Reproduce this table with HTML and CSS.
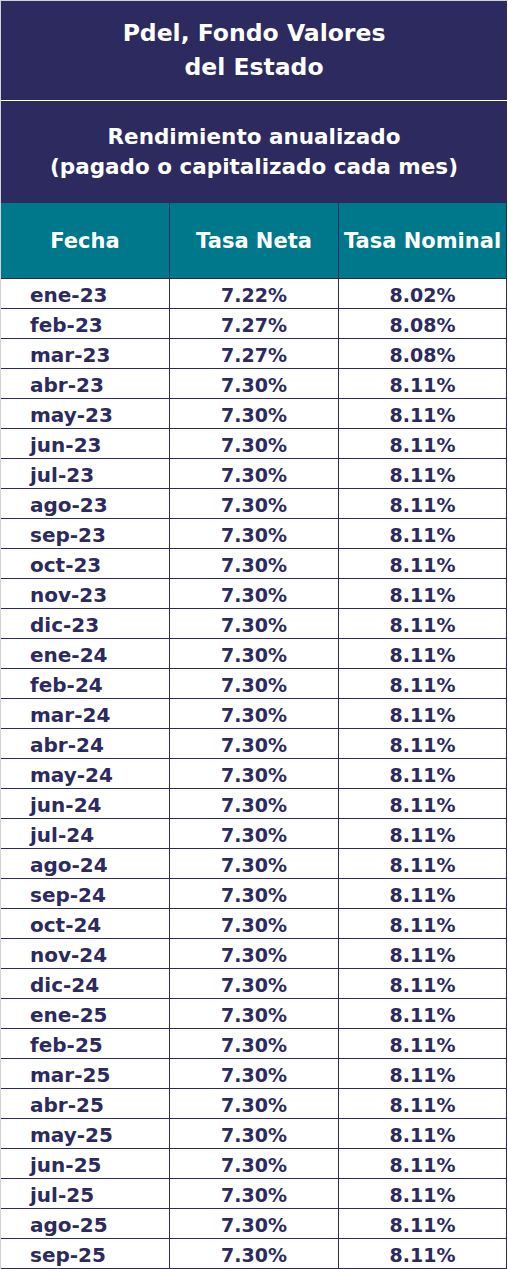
FILE: index.html
```html
<!DOCTYPE html>
<html lang="es">
<head>
<meta charset="utf-8">
<title>Pdel, Fondo Valores del Estado</title>
<link rel="stylesheet" href="styles.css">
</head>
<body>
<div class="page">
  <div class="sheet">
    <div class="title">Pdel, Fondo Valores<br>del Estado</div>
    <div class="subtitle">Rendimiento anualizado<br>(pagado o capitalizado cada mes)</div>
    <div class="row head">
      <div class="cell">Fecha</div>
      <div class="cell">Tasa Neta</div>
      <div class="cell">Tasa Nominal</div>
    </div>
    <div class="row"><div class="cell date">ene-23</div><div class="cell">7.22%</div><div class="cell">8.02%</div></div>
    <div class="row"><div class="cell date">feb-23</div><div class="cell">7.27%</div><div class="cell">8.08%</div></div>
    <div class="row"><div class="cell date">mar-23</div><div class="cell">7.27%</div><div class="cell">8.08%</div></div>
    <div class="row"><div class="cell date">abr-23</div><div class="cell">7.30%</div><div class="cell">8.11%</div></div>
    <div class="row"><div class="cell date">may-23</div><div class="cell">7.30%</div><div class="cell">8.11%</div></div>
    <div class="row"><div class="cell date">jun-23</div><div class="cell">7.30%</div><div class="cell">8.11%</div></div>
    <div class="row"><div class="cell date">jul-23</div><div class="cell">7.30%</div><div class="cell">8.11%</div></div>
    <div class="row"><div class="cell date">ago-23</div><div class="cell">7.30%</div><div class="cell">8.11%</div></div>
    <div class="row"><div class="cell date">sep-23</div><div class="cell">7.30%</div><div class="cell">8.11%</div></div>
    <div class="row"><div class="cell date">oct-23</div><div class="cell">7.30%</div><div class="cell">8.11%</div></div>
    <div class="row"><div class="cell date">nov-23</div><div class="cell">7.30%</div><div class="cell">8.11%</div></div>
    <div class="row"><div class="cell date">dic-23</div><div class="cell">7.30%</div><div class="cell">8.11%</div></div>
    <div class="row"><div class="cell date">ene-24</div><div class="cell">7.30%</div><div class="cell">8.11%</div></div>
    <div class="row"><div class="cell date">feb-24</div><div class="cell">7.30%</div><div class="cell">8.11%</div></div>
    <div class="row"><div class="cell date">mar-24</div><div class="cell">7.30%</div><div class="cell">8.11%</div></div>
    <div class="row"><div class="cell date">abr-24</div><div class="cell">7.30%</div><div class="cell">8.11%</div></div>
    <div class="row"><div class="cell date">may-24</div><div class="cell">7.30%</div><div class="cell">8.11%</div></div>
    <div class="row"><div class="cell date">jun-24</div><div class="cell">7.30%</div><div class="cell">8.11%</div></div>
    <div class="row"><div class="cell date">jul-24</div><div class="cell">7.30%</div><div class="cell">8.11%</div></div>
    <div class="row"><div class="cell date">ago-24</div><div class="cell">7.30%</div><div class="cell">8.11%</div></div>
    <div class="row"><div class="cell date">sep-24</div><div class="cell">7.30%</div><div class="cell">8.11%</div></div>
    <div class="row"><div class="cell date">oct-24</div><div class="cell">7.30%</div><div class="cell">8.11%</div></div>
    <div class="row"><div class="cell date">nov-24</div><div class="cell">7.30%</div><div class="cell">8.11%</div></div>
    <div class="row"><div class="cell date">dic-24</div><div class="cell">7.30%</div><div class="cell">8.11%</div></div>
    <div class="row"><div class="cell date">ene-25</div><div class="cell">7.30%</div><div class="cell">8.11%</div></div>
    <div class="row"><div class="cell date">feb-25</div><div class="cell">7.30%</div><div class="cell">8.11%</div></div>
    <div class="row"><div class="cell date">mar-25</div><div class="cell">7.30%</div><div class="cell">8.11%</div></div>
    <div class="row"><div class="cell date">abr-25</div><div class="cell">7.30%</div><div class="cell">8.11%</div></div>
    <div class="row"><div class="cell date">may-25</div><div class="cell">7.30%</div><div class="cell">8.11%</div></div>
    <div class="row"><div class="cell date">jun-25</div><div class="cell">7.30%</div><div class="cell">8.11%</div></div>
    <div class="row"><div class="cell date">jul-25</div><div class="cell">7.30%</div><div class="cell">8.11%</div></div>
    <div class="row"><div class="cell date">ago-25</div><div class="cell">7.30%</div><div class="cell">8.11%</div></div>
    <div class="row"><div class="cell date">sep-25</div><div class="cell">7.30%</div><div class="cell">8.11%</div></div>
  </div>
</div>
</body>
</html>
```

FILE: styles.css
```css
* { box-sizing: border-box; }

html, body {
  margin: 0;
  padding: 0;
  background: #ffffff;
}

.page {
  border-top: 1px solid #d2d2d2;
  border-left: 1px solid #d2d2d2;
  min-height: 1269px;
  font-family: "DejaVu Sans", "Liberation Sans", sans-serif;
  font-weight: bold;
  color: #2c2a5e;
}

.sheet {
  width: 506px;
}

.title {
  height: 100px;
  background: #2c2a5e;
  color: #ffffff;
  border-bottom: 1px solid #ffffff;
  display: flex;
  align-items: center;
  justify-content: center;
  text-align: center;
  font-size: 23.5px;
  line-height: 34px;
  padding-bottom: 1px;
}

.subtitle {
  height: 102px;
  background: #2c2a5e;
  color: #ffffff;
  display: flex;
  align-items: center;
  justify-content: center;
  text-align: center;
  font-size: 21.5px;
  line-height: 30px;
}

.row {
  display: grid;
  grid-template-columns: 169px 169px 168px;
  height: 30px;
}

.cell {
  border-right: 1px solid #2c2a5e;
  border-bottom: 1px solid #2c2a5e;
  display: flex;
  align-items: center;
  justify-content: center;
  font-size: 19px;
  padding-top: 2px;
}

.cell.date {
  justify-content: flex-start;
  padding-left: 29px;
  font-size: 20px;
}

.row.head {
  height: 76px;
  background: #00788b;
  color: #ffffff;
}

.row.head .cell {
  font-size: 21px;
  padding-top: 0;
}
```
